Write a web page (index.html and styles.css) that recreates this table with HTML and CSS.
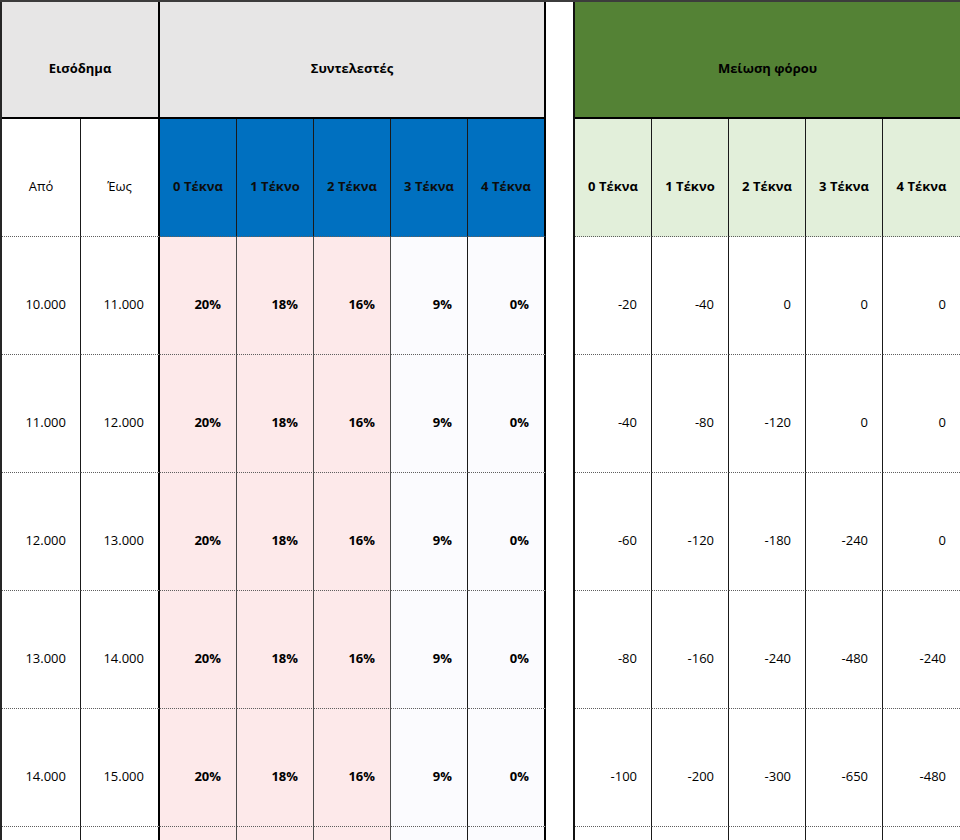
FILE: index.html
```html
<!DOCTYPE html>
<html lang="el">
<head>
<meta charset="utf-8">
<title>Μείωση φόρου</title>
<link rel="stylesheet" href="styles.css">
</head>
<body>
<div class="sheet">
  <div class="grid left">
    <div class="cell h1 span2 thick-r">Εισόδημα</div>
    <div class="cell h1 span5 thick-r">Συντελεστές</div>

    <div class="cell h2">Από</div>
    <div class="cell h2 thick-r">Έως</div>
    <div class="cell h2 blue">0 Τέκνα</div>
    <div class="cell h2 blue">1 Τέκνο</div>
    <div class="cell h2 blue">2 Τέκνα</div>
    <div class="cell h2 blue">3 Τέκνα</div>
    <div class="cell h2 blue thick-r">4 Τέκνα</div>

    <div class="cell num">10.000</div>
    <div class="cell num thick-r">11.000</div>
    <div class="cell num pct pink">20%</div>
    <div class="cell num pct pink">18%</div>
    <div class="cell num pct pink">16%</div>
    <div class="cell num pct lav">9%</div>
    <div class="cell num pct lav thick-r">0%</div>

    <div class="cell num">11.000</div>
    <div class="cell num thick-r">12.000</div>
    <div class="cell num pct pink">20%</div>
    <div class="cell num pct pink">18%</div>
    <div class="cell num pct pink">16%</div>
    <div class="cell num pct lav">9%</div>
    <div class="cell num pct lav thick-r">0%</div>

    <div class="cell num">12.000</div>
    <div class="cell num thick-r">13.000</div>
    <div class="cell num pct pink">20%</div>
    <div class="cell num pct pink">18%</div>
    <div class="cell num pct pink">16%</div>
    <div class="cell num pct lav">9%</div>
    <div class="cell num pct lav thick-r">0%</div>

    <div class="cell num">13.000</div>
    <div class="cell num thick-r">14.000</div>
    <div class="cell num pct pink">20%</div>
    <div class="cell num pct pink">18%</div>
    <div class="cell num pct pink">16%</div>
    <div class="cell num pct lav">9%</div>
    <div class="cell num pct lav thick-r">0%</div>

    <div class="cell num">14.000</div>
    <div class="cell num thick-r">15.000</div>
    <div class="cell num pct pink">20%</div>
    <div class="cell num pct pink">18%</div>
    <div class="cell num pct pink">16%</div>
    <div class="cell num pct lav">9%</div>
    <div class="cell num pct lav thick-r">0%</div>

    <div class="cell num short"></div>
    <div class="cell num short thick-r"></div>
    <div class="cell num short pct pink"></div>
    <div class="cell num short pct pink"></div>
    <div class="cell num short pct pink"></div>
    <div class="cell num short pct lav"></div>
    <div class="cell num short pct lav thick-r"></div>
  </div>

  <div class="gap"></div>

  <div class="grid right">
    <div class="cell h1 green span5">Μείωση φόρου</div>

    <div class="cell h2 lightgreen">0 Τέκνα</div>
    <div class="cell h2 lightgreen">1 Τέκνο</div>
    <div class="cell h2 lightgreen">2 Τέκνα</div>
    <div class="cell h2 lightgreen">3 Τέκνα</div>
    <div class="cell h2 lightgreen last">4 Τέκνα</div>

    <div class="cell num">-20</div>
    <div class="cell num">-40</div>
    <div class="cell num">0</div>
    <div class="cell num">0</div>
    <div class="cell num last">0</div>

    <div class="cell num">-40</div>
    <div class="cell num">-80</div>
    <div class="cell num">-120</div>
    <div class="cell num">0</div>
    <div class="cell num last">0</div>

    <div class="cell num">-60</div>
    <div class="cell num">-120</div>
    <div class="cell num">-180</div>
    <div class="cell num">-240</div>
    <div class="cell num last">0</div>

    <div class="cell num">-80</div>
    <div class="cell num">-160</div>
    <div class="cell num">-240</div>
    <div class="cell num">-480</div>
    <div class="cell num last">-240</div>

    <div class="cell num">-100</div>
    <div class="cell num">-200</div>
    <div class="cell num">-300</div>
    <div class="cell num">-650</div>
    <div class="cell num last">-480</div>

    <div class="cell num short"></div>
    <div class="cell num short"></div>
    <div class="cell num short"></div>
    <div class="cell num short"></div>
    <div class="cell num short last"></div>
  </div>
</div>
</body>
</html>
```

FILE: styles.css
```css
html, body {
  margin: 0;
  padding: 0;
  background: #ffffff;
}

body {
  width: 960px;
  height: 840px;
  overflow: hidden;
  font-family: "Open Sans", "Noto Sans", sans-serif;
  font-size: 13px;
  color: #000000;
}

.sheet {
  display: flex;
  align-items: flex-start;
  height: 838px;
  overflow: hidden;
  border-top: 2px solid #3c3c3c;
}

.grid {
  display: grid;
  grid-template-rows: 117px 118px repeat(5, 118px) 13px;
}

.left {
  border-left: 2px solid #262626;
  grid-template-columns: 79px 79px 77px 77px 77px 77px 78px;
}

.gap {
  width: 27px;
  flex: none;
}

.right {
  border-left: 2px solid #111111;
  grid-template-columns: 77px 77px 77px 77px 77px;
}

.cell {
  box-sizing: border-box;
  display: flex;
  align-items: center;
  justify-content: center;
  padding-top: 17px;
  border-right: 1px solid #1a1a1a;
  border-bottom: 1px dotted #5e5e5e;
  white-space: nowrap;
  overflow: hidden;
}

.short {
  border-bottom: none;
  padding-top: 0;
}

.thick-r {
  border-right: 2px solid #000000;
}

.last {
  border-right: none;
}

.span2 {
  grid-column: span 2;
}

.span5 {
  grid-column: span 5;
}

.h1 {
  background: #e7e6e6;
  font-weight: bold;
  border-bottom: 2px solid #000000;
}

.h1.green {
  background: #548235;
  border-right: none;
}

.h2 {
  font-weight: normal;
}

.blue {
  background: #0070c0;
  font-weight: bold;
  color: #0d0d0d;
}

.lightgreen {
  background: #e2efda;
  font-weight: bold;
}

.num {
  justify-content: flex-end;
  padding-right: 14px;
}

.pct {
  font-weight: bold;
  padding-right: 15px;
}

.pink {
  background: #fde9ea;
  border-right-color: #4a4a4a;
}

.lav {
  background: #fbfbfe;
}
```
